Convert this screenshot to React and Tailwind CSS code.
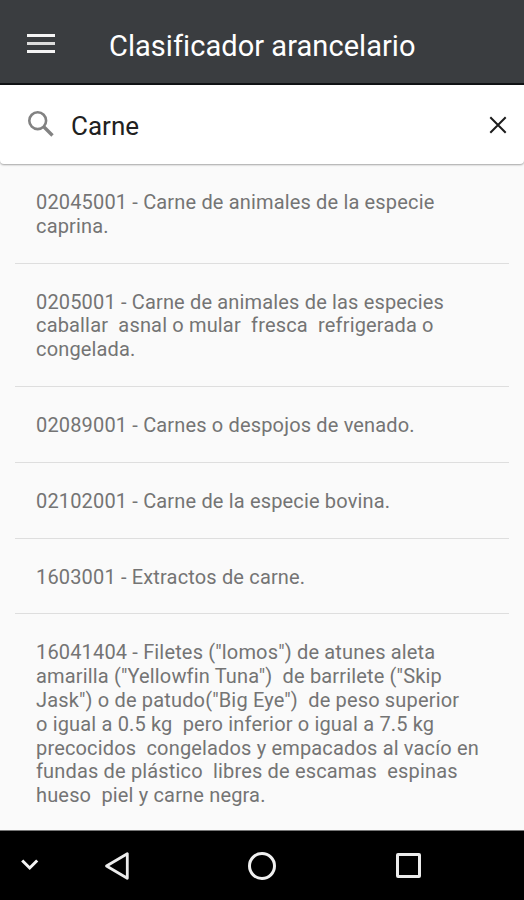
import React from 'react';

const results = [
  ['02045001 - Carne de animales de la especie', 'caprina.'],
  [
    '0205001 - Carne de animales de las especies',
    'caballar  asnal o mular  fresca  refrigerada o',
    'congelada.',
  ],
  ['02089001 - Carnes o despojos de venado.'],
  ['02102001 - Carne de la especie bovina.'],
  ['1603001 - Extractos de carne.'],
  [
    '16041404 - Filetes ("lomos") de atunes aleta',
    'amarilla ("Yellowfin Tuna")  de barrilete ("Skip',
    'Jask") o de patudo("Big Eye")  de peso superior',
    'o igual a 0.5 kg  pero inferior o igual a 7.5 kg',
    'precocidos  congelados y empacados al vacío en',
    'fundas de plástico  libres de escamas  espinas',
    'hueso  piel y carne negra.',
  ],
];

function Header() {
  return (
    <header className="flex h-[85px] shrink-0 items-center border-b-2 border-[#101214] bg-[#3a3d40] pt-1 pl-[27px]">
      <button className="flex w-7 flex-col gap-[5px]" aria-label="Menú">
        <span className="h-[3px] w-full bg-[#f5f5f5]" />
        <span className="h-[3px] w-full bg-[#dcdcdc]" />
        <span className="h-[3px] w-full bg-[#f5f5f5]" />
      </button>
      <h1 className="ml-[54px] pt-1 text-[29px] leading-8 tracking-[0.05px] whitespace-nowrap text-white">Clasificador arancelario</h1>
    </header>
  );
}

function SearchBar() {
  return (
    <div className="flex h-[79px] shrink-0 items-center rounded-b-[4px] bg-white shadow-[0_1px_2px_rgba(0,0,0,0.35)]">
      <svg viewBox="0 0 26 26" className="mb-0.5 ml-7 size-[26px] shrink-0" fill="none" stroke="#828282">
        <circle cx="9.7" cy="9.7" r="8.4" strokeWidth="2.6" />
        <path d="M15.5 15.5 24.5 24.5" strokeWidth="3.3" />
      </svg>
      <span className="ml-[17px] flex-1 pt-0.5 text-[26px] leading-8 text-[#212121]">Carne</span>
      <svg viewBox="0 0 18 18" className="mr-[17px] size-[18px] shrink-0" fill="none" stroke="#1c1c1c" strokeWidth="2">
        <path d="M1.3 1.3 16.7 16.7M16.7 1.3 1.3 16.7" />
      </svg>
    </div>
  );
}

function NavBar() {
  return (
    <nav className="h-[70px] shrink-0 border-t border-[#777] bg-black">
      <div className="flex h-[69px] items-center">
        <svg viewBox="0 0 18 12" className="mb-0.5 ml-[21px] h-3 w-[18px]" fill="none" stroke="#f5f5f5" strokeWidth="3">
          <path d="M1.2 1.5 8.7 9 16.2 1.5" />
        </svg>
        <svg viewBox="0 0 26 30" className="ml-[65px] h-[30px] w-[26px]" fill="none" stroke="#ececec" strokeWidth="2.8" strokeLinejoin="round">
          <path d="M2.5 15 23.3 2.7V27.3Z" />
        </svg>
        <span className="ml-[118px] size-7 rounded-full border-[3px] border-[#f0f0f0]" />
        <span className="ml-[120px] size-[25px] rounded-[2px] border-[3px] border-[#ececec]" />
      </div>
    </nav>
  );
}

export default function App() {
  return (
    <div className="flex h-[900px] w-[524px] flex-col overflow-hidden bg-[#fafafa] font-['Roboto',sans-serif]">
      <Header />
      <SearchBar />
      <ul className="min-h-0 flex-1 overflow-hidden px-[15px]">
        {results.map((lines) => (
          <li
            key={lines[0]}
            className="border-b border-[#dedede] px-[21px] pt-[27px] pb-6 text-[20px] leading-[23.8px] tracking-[0.16px] whitespace-pre text-[#747474] last:border-b-0"
          >
            {lines.join('\n')}
          </li>
        ))}
      </ul>
      <NavBar />
    </div>
  );
}
